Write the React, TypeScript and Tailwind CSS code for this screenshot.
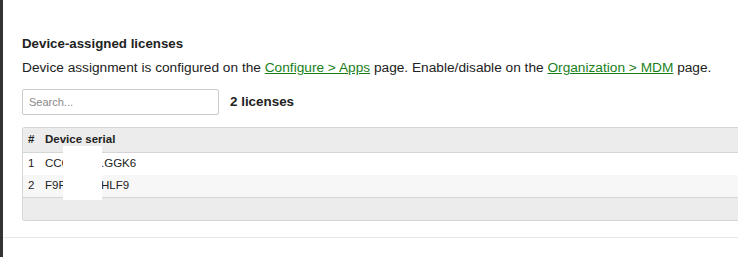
export default function App() {
  return (
    <div className="w-[738px] h-[257px] bg-white flex overflow-hidden" style={{ fontFamily: '"Liberation Sans", Arial, sans-serif' }}>
      <div className="w-[3px] shrink-0 bg-[#333333]" />
      <div className="flex-1 flex flex-col">
        <div className="pl-[19px] pt-[35px] text-[#222]">
          <div className="font-bold leading-[18px] text-[13.3px]">Device-assigned licenses</div>
          <div className="mt-[6px] leading-[18px] text-[13.7px] whitespace-nowrap">
            Device assignment is configured on the{' '}
            <a className="text-[#1a7f1a] underline">Configure &gt; Apps</a> page. Enable/disable on the{' '}
            <a className="text-[#1a7f1a] underline">Organization &gt; MDM</a> page.
          </div>
          <div className="mt-[12px] flex items-center gap-[11px]">
            <input
              placeholder="Search..."
              className="w-[197px] h-[26px] border border-[#cccccc] rounded-[2px] px-[6px] text-[11px] placeholder:text-[#888] outline-none"
            />
            <span className="font-bold text-[13.4px]">2 licenses</span>
          </div>
          <div className="relative mt-[12px] mr-[-4px] border border-[#d6d6d6] border-r-0 rounded-l-[3px] overflow-hidden text-[11.5px]">
            <div className="flex h-[25px] items-center bg-[#ececec] border-b border-[#d6d6d6] font-bold">
              <span className="w-[22px] pl-[5px]">#</span>
              <span>Device serial</span>
            </div>
            <div className="flex h-[22px] items-center bg-white">
              <span className="w-[22px] pl-[5px]">1</span>
              <span className="w-[56px] overflow-hidden whitespace-nowrap">CCC0000</span>
              <span>.GGK6</span>
            </div>
            <div className="flex h-[23px] items-center bg-[#f7f7f7] border-b border-[#d6d6d6]">
              <span className="w-[22px] pl-[5px]">2</span>
              <span className="w-[56px] overflow-hidden whitespace-nowrap">F9F0000</span>
              <span>HLF9</span>
            </div>
            <div className="h-[22px] bg-[#ececec]" />
            <div className="absolute left-[40px] top-[18px] w-[39px] h-[54px] bg-white" />
          </div>
        </div>
        <div className="mt-[16px] border-t border-[#e8e8e8]" />
      </div>
    </div>
  );
}
